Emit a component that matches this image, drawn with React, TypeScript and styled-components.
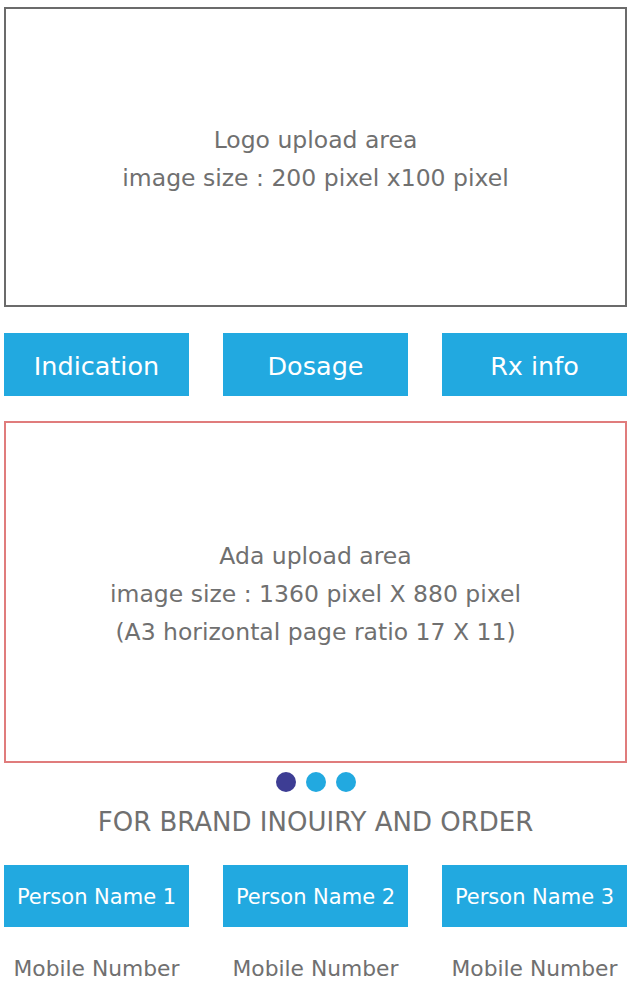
import React from "react";
import styled, { createGlobalStyle } from "styled-components";

const GlobalStyle = createGlobalStyle`
  html, body { margin: 0; padding: 0; background: #ffffff; }
  body { font-family: "DejaVu Sans", "Liberation Sans", sans-serif; }
  * { box-sizing: border-box; }
`;

const Page = styled.div`
  width: 631px;
  padding: 7px 4px 0 4px;
  display: flex;
  flex-direction: column;
  color: #707070;
`;

const UploadArea = styled.div<{ $border: string; $height: number; $top?: number }>`
  height: ${(p) => p.$height}px;
  margin-top: ${(p) => p.$top ?? 0}px;
  padding-top: 4px;
  border: 2px solid ${(p) => p.$border};
  display: flex;
  flex-direction: column;
  align-items: center;
  justify-content: center;
  text-align: center;
`;

const AreaLine = styled.div`
  font-size: 23.5px;
  line-height: 38px;
  color: #707070;
  white-space: nowrap;
`;

const ButtonRow = styled.div<{ $top: number; $height: number }>`
  margin-top: ${(p) => p.$top}px;
  display: grid;
  grid-template-columns: repeat(3, 185px);
  justify-content: space-between;
  height: ${(p) => p.$height}px;
`;

const BlueButton = styled.div<{ $size: number }>`
  background: #22a9e0;
  color: #ffffff;
  display: flex;
  align-items: center;
  justify-content: center;
  padding-top: 2px;
  font-size: ${(p) => p.$size}px;
  white-space: nowrap;
`;

const Dots = styled.div`
  margin-top: 9px;
  display: flex;
  justify-content: center;
  gap: 10px;
`;

const Dot = styled.span<{ $active?: boolean }>`
  width: 20px;
  height: 20px;
  border-radius: 50%;
  background: ${(p) => (p.$active ? "#3d3d94" : "#22a9e0")};
`;

const Heading = styled.div`
  margin-top: 12px;
  padding-top: 1px;
  height: 34px;
  text-align: center;
  font-size: 26px;
  line-height: 34px;
  color: #707070;
  white-space: nowrap;
`;

const ContactRow = styled.div`
  display: grid;
  grid-template-columns: repeat(3, 185px);
  justify-content: space-between;
  margin-top: 27px;
  height: 28px;
  align-items: center;
`;

const Mobile = styled.div`
  text-align: center;
  font-size: 21.8px;
  color: #707070;
  white-space: nowrap;
`;

export default function App() {
  return (
    <>
      <GlobalStyle />
      <Page>
        <UploadArea $border="#6b6b6b" $height={300}>
          <AreaLine>Logo upload area</AreaLine>
          <AreaLine>image size : 200 pixel x100 pixel</AreaLine>
        </UploadArea>
        <ButtonRow $top={26} $height={63}>
          <BlueButton $size={25.5}>Indication</BlueButton>
          <BlueButton $size={25.5}>Dosage</BlueButton>
          <BlueButton $size={25.5}>Rx info</BlueButton>
        </ButtonRow>
        <UploadArea $border="#e07c7c" $height={342} $top={25}>
          <AreaLine>Ada upload area</AreaLine>
          <AreaLine>image size : 1360 pixel X 880 pixel</AreaLine>
          <AreaLine>(A3 horizontal page ratio 17 X 11)</AreaLine>
        </UploadArea>
        <Dots>
          <Dot $active />
          <Dot />
          <Dot />
        </Dots>
        <Heading>FOR BRAND INOUIRY AND ORDER</Heading>
        <ButtonRow $top={27} $height={62}>
          <BlueButton $size={21}>Person Name 1</BlueButton>
          <BlueButton $size={21}>Person Name 2</BlueButton>
          <BlueButton $size={21}>Person Name 3</BlueButton>
        </ButtonRow>
        <ContactRow>
          <Mobile>Mobile Number</Mobile>
          <Mobile>Mobile Number</Mobile>
          <Mobile>Mobile Number</Mobile>
        </ContactRow>
      </Page>
    </>
  );
}
